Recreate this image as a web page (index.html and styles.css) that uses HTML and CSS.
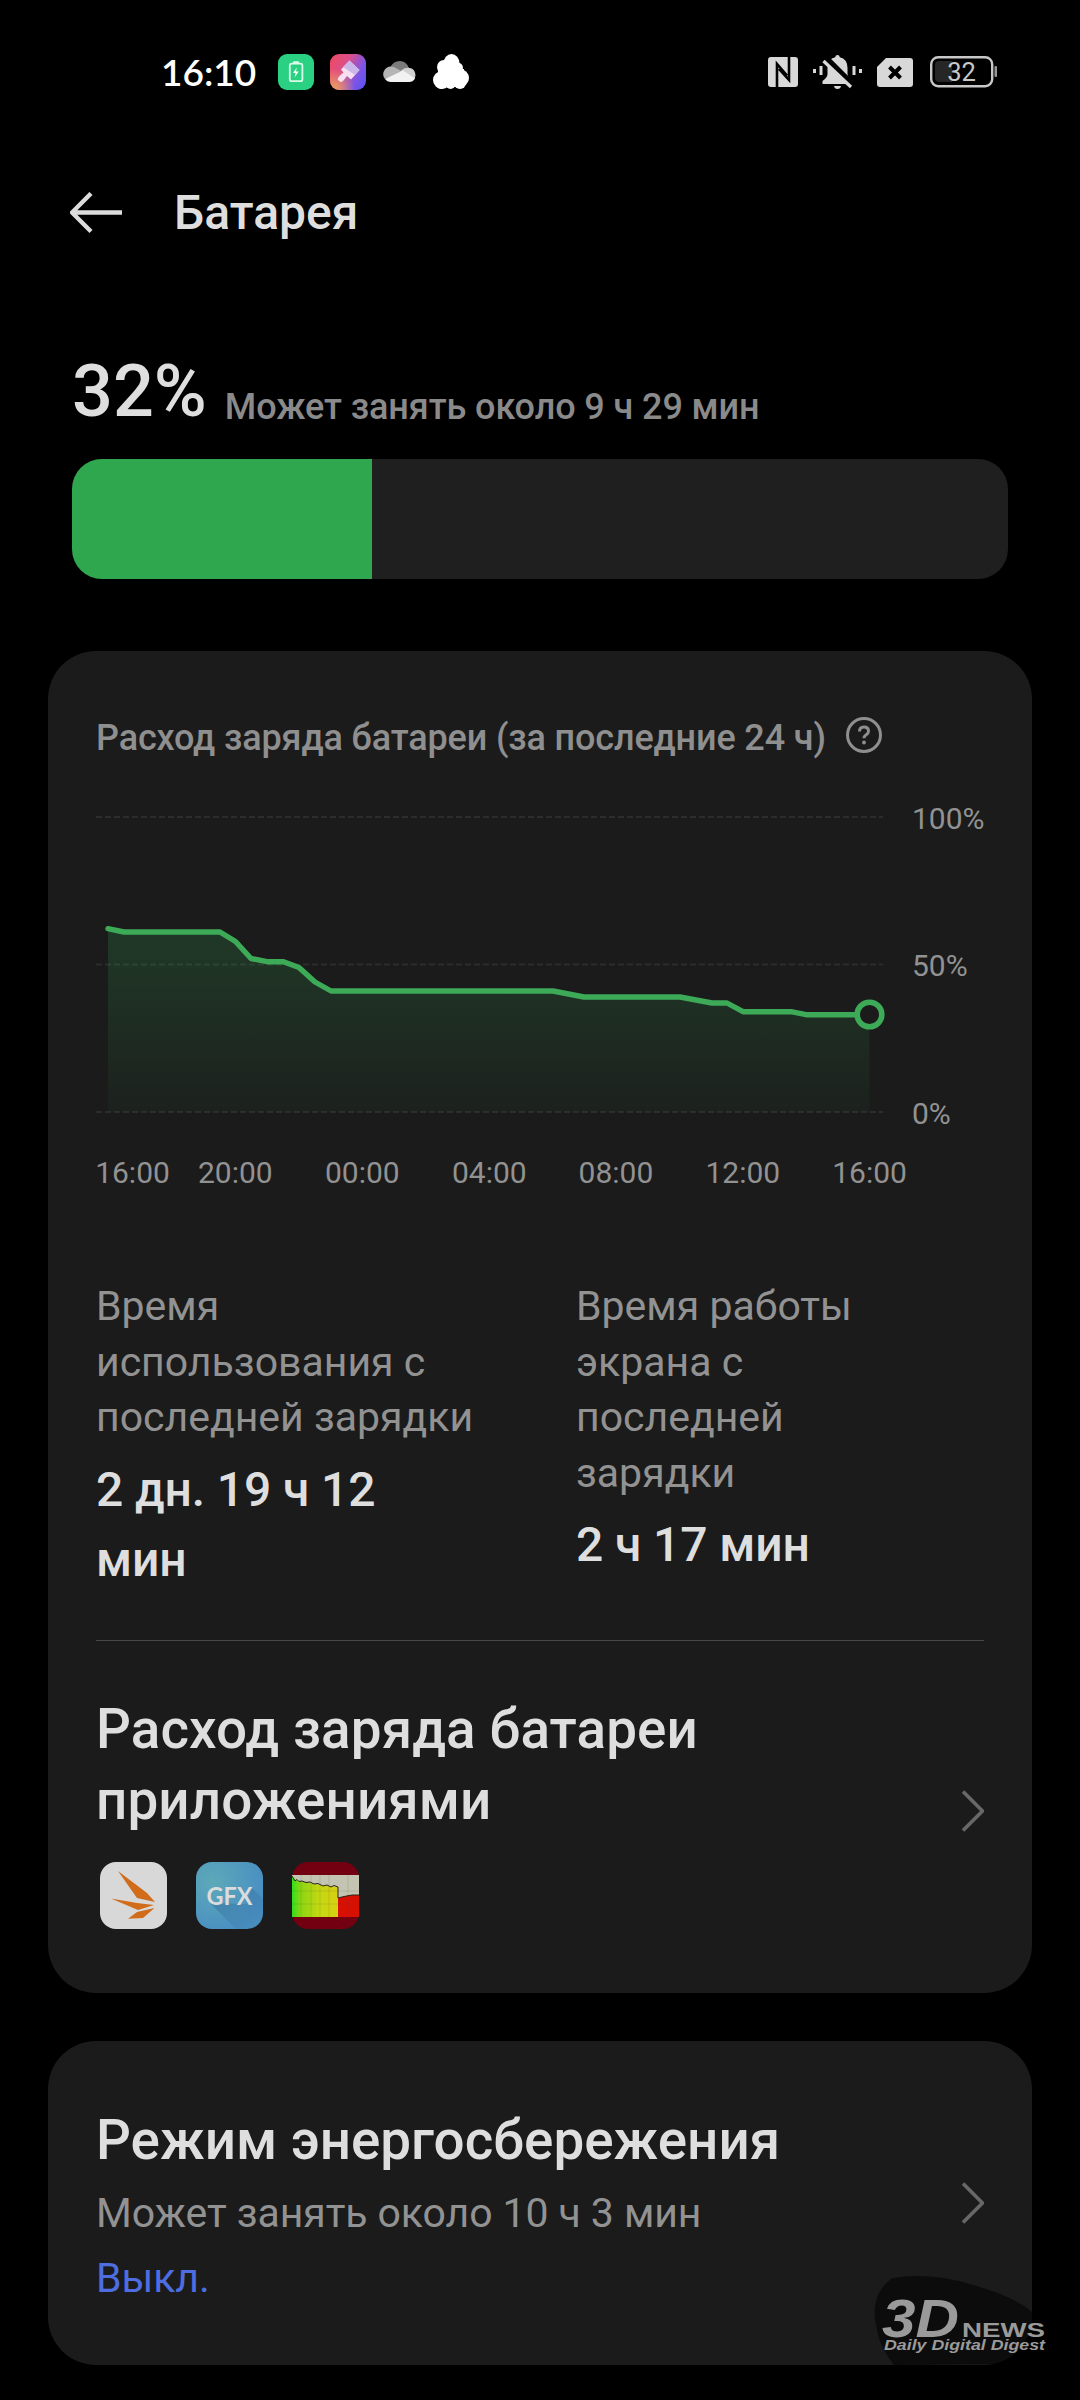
FILE: index.html
```html
<!DOCTYPE html>
<html lang="ru">
<head>
<meta charset="utf-8">
<title>Батарея</title>
<link rel="stylesheet" href="styles.css">
</head>
<body>
<div class="status">
  <span class="clock">16:10</span>
  <div class="status-left">
    <svg width="36" height="36" viewBox="0 0 36 36"><rect width="36" height="36" rx="9" fill="#2bd182"/><rect x="11.8" y="9.6" width="12.6" height="17.6" rx="2" fill="none" stroke="#d9fbe9" stroke-width="1.8"/><rect x="15" y="7.2" width="6" height="2.4" rx=".8" fill="#d9fbe9"/><path d="M18.8 13.5 15 19h2.6l-1 4.6 4-6H18z" fill="#fff"/></svg>
    <svg width="36" height="36" viewBox="0 0 36 36"><defs><linearGradient id="brush" x1="0" y1=".2" x2="1" y2=".7"><stop offset="0" stop-color="#ee4a66"/><stop offset=".4" stop-color="#d9508c"/><stop offset=".8" stop-color="#7a55e8"/><stop offset="1" stop-color="#6353ee"/></linearGradient><radialGradient id="warm" cx=".1" cy="1" r=".6"><stop offset="0" stop-color="#eda35c"/><stop offset="1" stop-color="#eda35c" stop-opacity="0"/></radialGradient></defs><rect width="36" height="36" rx="9" fill="url(#brush)"/><rect width="36" height="36" rx="9" fill="url(#warm)"/><path d="M19.500 6.500 29.500 16 21 25.500 17 22l-4 5q-2.500 2-4.500-.5-1.500-2 .5-4l4.500-4-2.500-3z" fill="#f6dff0"/><path d="M19.500 6.500 29.500 16 25 21 13 13z" fill="#cbb6ea"/></svg>
    <svg class="cloud" width="33" height="22" viewBox="0 0 33 22"><path d="M7 7Q10 0 17 0q6 0 9 7l-9 5z" fill="#7b7b7b"/><path d="M2 18q-3-4-1-8 3-6 10-4l11 6z" fill="#b5b5b5"/><path d="M17 11q4-5 10-4 5 1 5.500 7 0 3-2 5z" fill="#d2d2d2"/><path d="M2 18 20 9.500l12 8q-2 3.500-6 3.500H8q-4 0-6-3z" fill="#f2f2f2"/></svg>
    <svg width="36" height="36" viewBox="0 0 36 36"><g fill="#fff"><ellipse cx="18.500" cy="9.500" rx="8" ry="9.500"/><circle cx="11" cy="13" r="7"/><circle cx="24.500" cy="14" r="5.500"/><circle cx="9" cy="26" r="9"/><circle cx="27" cy="24" r="9"/><rect x="5" y="15" width="26" height="18"/><circle cx="8" cy="30" r="5"/><circle cx="17.500" cy="30" r="5"/><circle cx="27" cy="29" r="6"/></g></svg>
  </div>
  <div class="status-right">
    <svg width="30" height="30" viewBox="0 0 30 30"><rect width="30" height="30" rx="3" fill="#d8d8d8"/><path d="M9 30V7l10 11.500M21 0v23L11 12" fill="none" stroke="#000" stroke-width="2.600"/></svg>
    <svg class="bell" width="49" height="34" viewBox="0 0 49 34"><g fill="#d8d8d8"><path d="M24.500 0q2 0 2.300 2.200Q34.500 4 34.500 13v6q0 3.500 5 7v3h-30v-3q5-3.500 5-7v-6q0-9 7.700-10.800Q22.500 0 24.500 0z"/><path d="M21 31h7q-.5 3-3.500 3T21 31zM0 14h3v4H0zM6.500 11h3v9h-3zM39.500 11h3v9h-3zM46 14h3v4h-3z"/></g><path d="M13 3 40 30" stroke="#000" stroke-width="6"/><path d="M10.500 6 38 32" stroke="#d8d8d8" stroke-width="3.200"/></svg>
    <svg class="sim" width="36" height="29" viewBox="0 0 36 29"><path d="M9 0h24q3 0 3 3v23q0 3-3 3H3q-3 0-3-3V9z" fill="#d8d8d8"/><path d="m12.500 9 11 11m0-11-11 11" stroke="#000" stroke-width="4"/></svg>
    <svg width="68" height="32" viewBox="0 0 68 32"><rect x="1.200" y="1.200" width="61" height="29" rx="7" fill="none" stroke="#c8c8c8" stroke-width="2.400"/><path d="M9 5h13v21H9q-4 0-4-4V9q0-4 4-4z" fill="#262626"/><rect x="64.500" y="10" width="2.500" height="11" rx="1" fill="#999"/><text class="level" x="31.500" y="25" text-anchor="middle">32</text></svg>
  </div>
</div>

<header class="header">
  <svg width="52" height="42" viewBox="0 0 52 42"><path d="M52 20.500H3M21 1.500 2 20.500l19 19" fill="none" stroke="#dcdcdc" stroke-width="4.400"/></svg>
  <h1>Батарея</h1>
</header>

<section class="summary">
  <div class="charge"><span class="percent">32%</span><span class="estimate">Может занять около 9 ч 29 мин</span></div>
  <div class="bar"><div class="bar-fill" style="width:32%"></div></div>
</section>

<section class="card">
  <div class="card-title">Расход заряда батареи (за последние 24 ч)
    <svg width="36" height="36" viewBox="0 0 36 36"><circle cx="18" cy="18" r="16.500" fill="none" stroke="#8f8f8f" stroke-width="3"/><path d="M13.500 14.500q0-4.500 4.500-4.500t4.500 4.200q0 2-2.300 3.500T18 21.300" fill="none" stroke="#8f8f8f" stroke-width="3"/><circle cx="18" cy="25.500" r="1.900" fill="#8f8f8f"/></svg>
  </div>
  <svg class="chart" width="888" height="410" viewBox="0 0 888 410">
    <defs><linearGradient id="area" gradientUnits="userSpaceOnUse" x1="0" y1="139" x2="0" y2="322"><stop offset="0" stop-color="#34b058" stop-opacity=".2"/><stop offset="1" stop-color="#34b058" stop-opacity=".04"/></linearGradient></defs>
    <path class="grid" d="M0 27H787M0 174.500H787M0 322H787"/>
    <path fill="url(#area)" d="M12 138.700 28 142H124L139.500 151.500 155 168.500 171 171.700H187.500L203 177.500 219 192 235 201H457L488 207H584L616 213H631L647 221.700H695L710 224.700H773.500V322H12z"/>
    <path class="line" d="M12 138.700 28 142H124L139.500 151.500 155 168.500 171 171.700H187.500L203 177.500 219 192 235 201H457L488 207H584L616 213H631L647 221.700H695L710 224.700H773.500"/>
    <circle class="marker" cx="773.500" cy="224.500" r="12.300"/>
    <g class="axis">
      <text x="816" y="39">100%</text><text x="816" y="186">50%</text><text x="816" y="334">0%</text>
      <g text-anchor="middle"><text x="36.500" y="393">16:00</text><text x="139.300" y="393">20:00</text><text x="266.300" y="393">00:00</text><text x="393.300" y="393">04:00</text><text x="519.900" y="393">08:00</text><text x="646.800" y="393">12:00</text><text x="773.600" y="393">16:00</text></g>
    </g>
  </svg>
  <div class="stats">
    <div><p class="label">Время<br>использования с<br>последней зарядки</p><p class="value">2 дн. 19 ч 12<br>мин</p></div>
    <div><p class="label">Время работы<br>экрана с<br>последней<br>зарядки</p><p class="value">2 ч 17 мин</p></div>
  </div>
  <div class="row">
    <div>
      <h2>Расход заряда батареи<br>приложениями</h2>
      <div class="apps">
        <svg width="67" height="67" viewBox="0 0 67 67"><rect width="67" height="67" rx="16" fill="#d8d8d8"/><path d="M18 9 47 31l8 9-18-4zM11 36.500 37 41l17 2-16 5zM54.500 46 43 56l-15 .8L37 50z" fill="#d06c1a"/></svg>
        <svg width="67" height="67" viewBox="0 0 67 67"><defs><radialGradient id="gfx" cx=".25" cy=".3" r=".75"><stop offset="0" stop-color="#5da9b8"/><stop offset="1" stop-color="#4a90c2"/></radialGradient><linearGradient id="fade" x1=".2" y1=".2" x2=".8" y2=".9"><stop offset="0" stop-color="#35709f" stop-opacity=".6"/><stop offset="1" stop-color="#35709f" stop-opacity=".1"/></linearGradient></defs><rect width="67" height="67" rx="16" fill="url(#gfx)"/><path d="M14 41 40 67H51Q67 67 67 51V37L56 26 50 42z" fill="url(#fade)"/><text class="gfx" x="33.500" y="42.500" text-anchor="middle" textLength="46" lengthAdjust="spacingAndGlyphs">GFX</text></svg>
        <svg width="67" height="67" viewBox="0 0 67 67"><defs><linearGradient id="heat"><stop offset="0" stop-color="#2fdf1c"/><stop offset=".18" stop-color="#8ad512"/><stop offset=".6" stop-color="#c4d812"/><stop offset="1" stop-color="#d8cf12"/></linearGradient></defs><rect width="67" height="67" rx="16" fill="#720010"/><path fill="#c4c4b2" d="M0 13h67v42H0z"/><path fill="url(#heat)" d="M0 14 4 18.500 12 20 22 22 32 23.500 46 25V55H0z"/><path fill="#d81004" d="M46 36 52 34.500 60 33H67V55H46z"/><path d="M9 13V55M19 13V55M28 13V55M37 13V55M56 13V55M0 29H67M0 42H67" stroke="#333" stroke-opacity=".12"/><path d="M0 14 3 19 5 17.500 7 19.500 10 19 14 20.500 18 20 22 22 26 21.500 31 24 35 23 39 25 42 23.500 46 25V36L52 34.500 60 33H67" fill="none" stroke="#2b2510"/></svg>
      </div>
    </div>
    <svg class="chevron" width="24" height="44" viewBox="0 0 24 44"><path d="M3 2.500 22.500 22 3 41.500" fill="none" stroke="#686868" stroke-width="3.600"/></svg>
  </div>
</section>

<section class="card saver">
  <div class="saver-text">
    <h2>Режим энергосбережения</h2>
    <p class="label">Может занять около 10 ч 3 мин</p>
    <p class="label off">Выкл.</p>
  </div>
  <svg class="chevron" width="24" height="44" viewBox="0 0 24 44"><path d="M3 2.500 22.500 22 3 41.500" fill="none" stroke="#686868" stroke-width="3.600"/></svg>
</section>

<svg class="watermark" width="210" height="100" viewBox="0 0 210 100">
  <path d="M22 8Q60 2 100 14q50 14 66 32l10 20Q160 92 130 94L24 95Q10 78 7 60-2 26 22 8z" fill="#000" opacity=".55"/>
  <g class="mark">
    <text class="three" x="12" y="67" textLength="77" lengthAdjust="spacingAndGlyphs">3D</text>
    <text class="news" x="92" y="67" textLength="83" lengthAdjust="spacingAndGlyphs">NEWS</text>
    <text class="motto" x="14" y="80" textLength="161" lengthAdjust="spacingAndGlyphs">Daily Digital Digest</text>
  </g>
</svg>
</body>
</html>
```
FILE: styles.css
```css
* { box-sizing: border-box; margin: 0; padding: 0; }
body { position: relative; width: 1080px; height: 2400px; overflow: hidden; background: #000; color: #dedede; font-family: Roboto, "Noto Sans", sans-serif; }
svg { display: block; flex: none; }

.status { display: flex; align-items: center; height: 144px; padding: 0 84px 0 161px; }
.clock { width: 117px; font: 600 37px/44px Lato, sans-serif; letter-spacing: 0; color: #fff; white-space: nowrap; }
.status-left { display: flex; align-items: center; gap: 17px; }
.status-left svg:nth-child(2) { margin-left: -1px; }
.status-right { display: flex; align-items: center; margin-left: auto; gap: 15px; }
.status-right svg:last-child { margin: 0 -2px 0 2px; }
.level { font: 400 25.5px Roboto, sans-serif; fill: #c8c8c8; }

.header { display: flex; align-items: center; gap: 52px; height: 137px; padding-left: 70px; }
h1 { font-size: 48px; line-height: 56px; font-weight: 500; }

.summary { padding: 69px 72px 0; }
.charge { display: flex; align-items: flex-end; height: 84px; gap: 18px; }
.percent { font-size: 72px; line-height: 84px; font-weight: 500; }
.estimate { margin-bottom: 6px; font-size: 36px; line-height: 42px; font-weight: 500; letter-spacing: -0.1px; color: #8a8a8a; }
.bar { height: 120px; margin-top: 25px; overflow: hidden; border-radius: 30px; background: #1f1f1f; }
.bar-fill { height: 100%; background: #2ea74e; }

.card { margin: 72px 48px 0; padding: 66px 48px 64px; border-radius: 48px; background: #1b1b1b; }
.card-title { display: flex; align-items: center; gap: 20px; height: 42px; font-size: 36px; line-height: 42px; font-weight: 500; letter-spacing: -0.14px; color: #8f8f8f; }
.card-title svg { margin-top: -6px; }

.chart { margin-top: 31px; overflow: visible; }
.grid { stroke: #2b2c2c; stroke-width: 2; stroke-dasharray: 6 3; }
.line { fill: none; stroke: #3daa58; stroke-width: 5.4; stroke-linejoin: round; stroke-linecap: round; }
.marker { fill: #1b1b1b; stroke: #3daa58; stroke-width: 5.6; }
.axis { font-size: 30px; fill: #929292; }

.stats { display: grid; grid-template-columns: 480px 1fr; margin-top: 79px; padding-bottom: 45px; border-bottom: 1px solid #484848; }
.label { font-size: 41px; line-height: 55.5px; color: #929292; }
.value { margin-top: 9px; font-size: 48px; line-height: 70px; font-weight: 500; letter-spacing: -0.1px; }

.row { display: flex; align-items: center; justify-content: space-between; padding-top: 53px; }
h2 { font-size: 54.8px; line-height: 71px; font-weight: 500; }
.row h2 { letter-spacing: 0.1px; }
.apps { display: flex; gap: 29px; margin: 26px 0 0 4px; }
.gfx { font: 700 25px Lato, sans-serif; fill: #dcdcdc; }

.saver { display: flex; align-items: center; justify-content: space-between; height: 324px; margin-top: 48px; padding: 0 48px; }
.saver-text { padding-top: 6px; }
.saver .label { margin-top: 10px; letter-spacing: -0.08px; }
.saver .off { color: #4e6de0; }

.watermark { position: absolute; left: 870px; top: 2270px; }
.mark { fill: #9a9a9a; font-family: "Liberation Sans", sans-serif; font-weight: 700; }
.three { font-size: 54px; font-style: italic; }
.news { font-size: 20px; }
.motto { font-size: 14px; font-style: italic; }
```
